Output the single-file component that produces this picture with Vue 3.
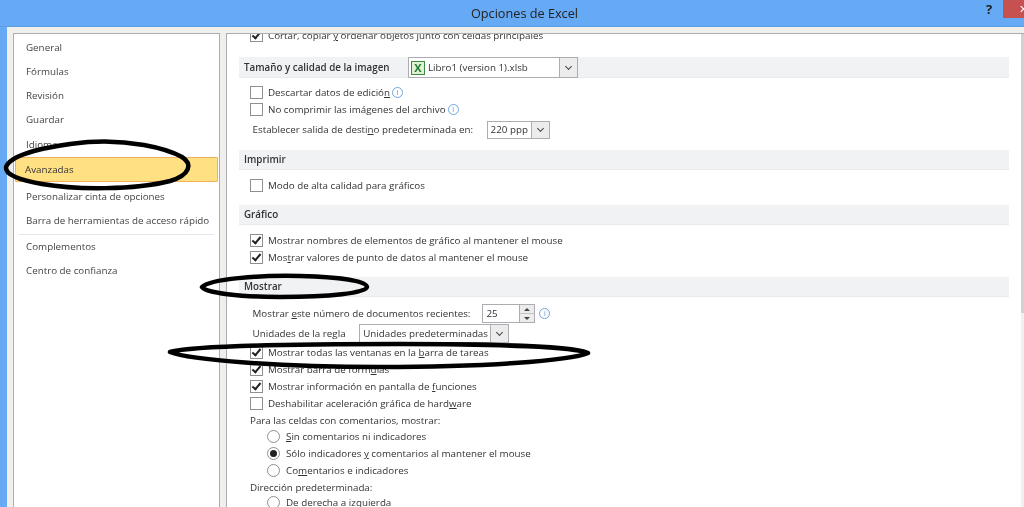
<template>
  <div class="window">
    <div class="titlebar">
      <span class="title">Opciones de Excel</span>
      <span class="help">?</span>
      <span class="close">✕</span>
    </div>

    <div class="body">
      <ul class="sidebar">
        <li v-for="item in menuTop" :key="item" :class="{ active: item === 'Avanzadas' }">{{ item }}</li>
        <li class="sep"></li>
        <li v-for="item in menuBottom" :key="item">{{ item }}</li>
      </ul>

      <div class="panel">
        <div class="content">
          <div class="row first"><span class="check on"></span>Cortar, copiar <u>y</u> ordenar objetos junto con celdas principales</div>

          <div class="section tall">
            <b>Tamaño y calidad de la imagen</b>
            <div class="select doc-select">
              <span class="xl-icon">X</span>
              <span class="select-text">Libro1 (version 1).xlsb</span>
              <span class="select-btn"><i class="chev"></i></span>
            </div>
          </div>
          <div class="row"><span class="check"></span>Descartar datos de edició<u>n</u><span class="info">i</span></div>
          <div class="row"><span class="check"></span>No comprimir las imá<u>g</u>enes del archivo<span class="info">i</span></div>
          <div class="row wide plain salida">
            Establecer salida de desti<u>n</u>o predeterminada en:
            <div class="select ppp-select">
              <span class="select-text">220 ppp</span>
              <span class="select-btn"><i class="chev"></i></span>
            </div>
          </div>

          <div class="section imprimir"><b>Imprimir</b></div>
          <div class="row"><span class="check"></span>Modo de alta calidad para gráficos</div>

          <div class="section grafico"><b>Gráfico</b></div>
          <div class="row"><span class="check on"></span>Mostrar nombres de elementos de gráfico al mantener el mouse</div>
          <div class="row"><span class="check on"></span>Mos<u>t</u>rar valores de punto de datos al mantener el mouse</div>

          <div class="section mostrar"><b>Mostrar</b></div>
          <div class="row wide plain recientes">
            Mostrar <u>e</u>ste número de documentos recientes:
            <div class="spinner">
              <span class="select-text">25</span>
              <span class="spin-btns"><i class="up"></i><i class="down"></i></span>
            </div>
            <span class="info">i</span>
          </div>
          <div class="row plain unidades">
            Unidades de la re<u>g</u>la
            <div class="select unit-select">
              <span class="select-text">Unidades predeterminadas</span>
              <span class="select-btn"><i class="chev"></i></span>
            </div>
          </div>
          <div class="row todas"><span class="check on"></span>Mostrar todas las ventanas en la <u>b</u>arra de tareas</div>
          <div class="row"><span class="check on"></span>Mostrar barra de fórm<u>u</u>las</div>
          <div class="row"><span class="check on"></span>Mostrar información en pantalla de <u>f</u>unciones</div>
          <div class="row"><span class="check"></span>Deshabilitar aceleración gráfica de hard<u>w</u>are</div>
          <div class="row plain">Para las celdas con comentarios, mostrar:</div>
          <div class="row radio-row radio-first"><span class="radio"></span><u>S</u>in comentarios ni indicadores</div>
          <div class="row radio-row"><span class="radio on"></span>Sólo indicadores <u>y</u> comentarios al mantener el mouse</div>
          <div class="row radio-row"><span class="radio"></span>Co<u>m</u>entarios e indicadores</div>
          <div class="row plain">Dirección predeterminada:</div>
          <div class="row radio-row radio-last"><span class="radio"></span>De derecha a izquierda</div>
        </div>
        <div class="scrollbar"><div class="thumb"></div></div>
      </div>
    </div>

    <svg class="marks" width="1024" height="507" viewBox="0 0 1024 507">
      <path d="M6 167 C11 154 48 146 88 142 C128 139 166 148 182 157 C193 164 190 175 170 181 C135 190 76 190 42 184 C20 180 5 175 6 167 Z" />
      <path d="M202 287 C210 279 258 275 300 276 C340 277 366 281 367 287 C366 293 330 297 280 297 C240 297 206 293 202 287 Z" />
      <path d="M170 352 C190 346 280 344 400 344 C500 344 575 347 588 353 C570 361 480 367 380 367 C280 367 190 360 170 352 Z" />
    </svg>
  </div>
</template>

<script setup>
const menuTop = [
  'General',
  'Fórmulas',
  'Revisión',
  'Guardar',
  'Idioma',
  'Avanzadas',
  'Personalizar cinta de opciones',
  'Barra de herramientas de acceso rápido'
]
const menuBottom = ['Complementos', 'Centro de confianza']
</script>

<style>
html, body {
  margin: 0;
  overflow: hidden;
  background: #fff;
}
</style>

<style scoped>
.window {
  position: relative;
  width: 1024px;
  height: 507px;
  display: flex;
  flex-direction: column;
  overflow: hidden;
  background: #66a9f5;
  font-family: "Open Sans", "Noto Sans", sans-serif;
  font-size: 9.8px;
  color: #333;
  filter: blur(0.4px);
}

.titlebar {
  position: relative;
  height: 27px;
  flex-shrink: 0;
  text-align: center;
  line-height: 27px;
  box-sizing: border-box;
  border-bottom: 1px solid #5b9be0;
}

.title {
  font-size: 12.7px;
  color: #222;
  margin-left: 25px;
}

.help {
  position: absolute;
  left: 986px;
  top: 0;
  font-size: 13px;
  font-weight: 700;
  color: #222;
  line-height: 18px;
}

.close {
  position: absolute;
  left: 1003px;
  top: 0;
  width: 21px;
  height: 18px;
  background: #c75050;
  color: #fff;
  font-size: 11px;
  line-height: 18px;
  padding-left: 16px;
  box-sizing: border-box;
  overflow: hidden;
}

.body {
  flex: 1;
  min-height: 0;
  margin-left: 7px;
  padding: 6px 0 0 6px;
  display: flex;
  gap: 6px;
  background: #f1efec;
}

.sidebar {
  width: 207px;
  box-sizing: border-box;
  margin: 0;
  padding: 1.5px 1px 0;
  list-style: none;
  background: #fff;
  border: 1px solid #a9adb5;
  border-bottom: none;
  flex-shrink: 0;
}

.sidebar li {
  height: 24.3px;
  line-height: 24.3px;
  padding-left: 11px;
  color: #444;
}

.sidebar li.active {
  height: 25px;
  box-sizing: border-box;
  margin-bottom: 3px;
  background: #ffe184;
  border: 1px solid #f0b05c;
  border-radius: 1px;
  line-height: 23px;
  padding-left: 9px;
  color: #333;
}

.sidebar li.sep {
  height: 1px;
  margin: 0 4px;
  padding: 0;
  background: #e6e6e6;
}

.panel {
  flex: 1;
  min-width: 0;
  display: flex;
  background: #fff;
  border-left: 1px solid #a9adb5;
  border-top: 1px solid #a9adb5;
}

.content {
  flex: 1;
  min-width: 0;
  overflow: hidden;
  padding-left: 12px;
  padding-right: 12px;
}

.scrollbar {
  width: 3px;
  flex-shrink: 0;
  background: #f0f0f0;
}

.thumb {
  height: 279px;
  background: #d2d2d2;
}

.section {
  height: 19px;
  display: flex;
  align-items: center;
  padding-left: 5px;
  background: #f1f2f4;
  border-bottom: 1px solid #e8eaee;
  color: #333;
}

.section b {
  font-weight: 600;
}

.section.tall {
  height: 20px;
  margin-top: 13px;
  margin-bottom: 6px;
  position: relative;
}

.imprimir {
  margin-top: 10px;
  margin-bottom: 7px;
}

.grafico {
  margin-top: 11px;
  margin-bottom: 7px;
}

.mostrar {
  margin-top: 11px;
  margin-bottom: 5px;
}

.row {
  height: 17px;
  display: flex;
  align-items: center;
  padding-left: 12px;
  white-space: pre;
}

.row.first {
  margin-top: -7px;
}

.row.plain {
  padding-left: 13px;
}

.row.wide {
  height: 21px;
}

.salida {
  margin-top: 1px;
}

.row.recientes {
  height: 22px;
}

.row.unidades {
  height: 19px;
}

.todas {
  margin-top: 1px;
}

.radio-row {
  padding-left: 28px;
}

.radio-first {
  margin-top: -1px;
}

.radio-last {
  margin-top: -2px;
}

.check {
  width: 11px;
  height: 11px;
  margin-right: 6px;
  border: 1px solid #8f8f8f;
  background: #fff;
  position: relative;
  flex-shrink: 0;
}

.check.on::after {
  content: "";
  position: absolute;
  left: 3px;
  top: 0;
  width: 3px;
  height: 7px;
  border: solid #222;
  border-width: 0 2px 2px 0;
  transform: rotate(40deg);
}

.radio {
  width: 11px;
  height: 11px;
  margin-right: 7px;
  border: 1px solid #8f8f8f;
  border-radius: 50%;
  background: #fff;
  position: relative;
  flex-shrink: 0;
}

.radio.on::after {
  content: "";
  position: absolute;
  left: 2px;
  top: 2px;
  width: 7px;
  height: 7px;
  border-radius: 50%;
  background: #222;
}

.info {
  width: 9px;
  height: 9px;
  margin-left: 2px;
  border: 1px solid #6fa6dc;
  border-radius: 50%;
  color: #4f8fd0;
  font-size: 7px;
  line-height: 9px;
  text-align: center;
  flex-shrink: 0;
}

.select {
  display: flex;
  align-items: center;
  box-sizing: border-box;
  background: #fff;
  border: 1px solid #abadb3;
}

.select-text {
  flex: 1;
  padding-left: 3px;
}

.select-btn {
  align-self: stretch;
  width: 17px;
  background: #ececec;
  border-left: 1px solid #abadb3;
  display: flex;
  align-items: center;
  justify-content: center;
  flex-shrink: 0;
}

.chev {
  width: 4px;
  height: 4px;
  margin-top: -3px;
  border: solid #444;
  border-width: 0 1.5px 1.5px 0;
  transform: rotate(45deg);
}

.doc-select {
  position: absolute;
  left: 169px;
  top: 0;
  width: 170px;
  height: 21px;
}

.xl-icon {
  width: 14px;
  height: 14px;
  margin-left: 2px;
  box-sizing: border-box;
  border: 1px solid #3d8a3d;
  background: #dff0d4;
  color: #1d7a32;
  font-size: 11px;
  font-weight: 700;
  line-height: 12px;
  text-align: center;
  flex-shrink: 0;
}

.ppp-select {
  width: 63px;
  height: 18px;
  margin-left: 11px;
}

.unit-select {
  width: 150px;
  height: 19px;
  margin-left: 11px;
}

.spinner {
  width: 53px;
  height: 19px;
  margin-left: 9.5px;
  box-sizing: border-box;
  display: flex;
  align-items: center;
  border: 1px solid #abadb3;
}

.spin-btns {
  width: 14px;
  align-self: stretch;
  display: flex;
  flex-direction: column;
  background: #ececec;
  border-left: 1px solid #abadb3;
}

.spin-btns i {
  flex: 1;
  position: relative;
}

.spin-btns .up {
  border-bottom: 1px solid #c4c4c4;
}

.spin-btns i::after {
  content: "";
  position: absolute;
  left: 4px;
  border-left: 3px solid transparent;
  border-right: 3px solid transparent;
}

.spin-btns .up::after {
  top: 3px;
  border-bottom: 3px solid #444;
}

.spin-btns .down::after {
  top: 3px;
  border-top: 3px solid #444;
}

.spinner + .info {
  margin-left: 4px;
}

.marks {
  position: absolute;
  left: 0;
  top: 0;
  pointer-events: none;
}

.marks path {
  fill: none;
  stroke: #000;
  stroke-width: 4.5;
  stroke-linejoin: round;
}

.row > .check {
  margin-right: 5px;
}

.row.plain {
  padding-left: 11px;
}

.row.radio-row .radio {
  margin-right: 6px;
}

.row:not(.plain):not(.radio-row) {
  padding-left: 11px;
}
</style>
